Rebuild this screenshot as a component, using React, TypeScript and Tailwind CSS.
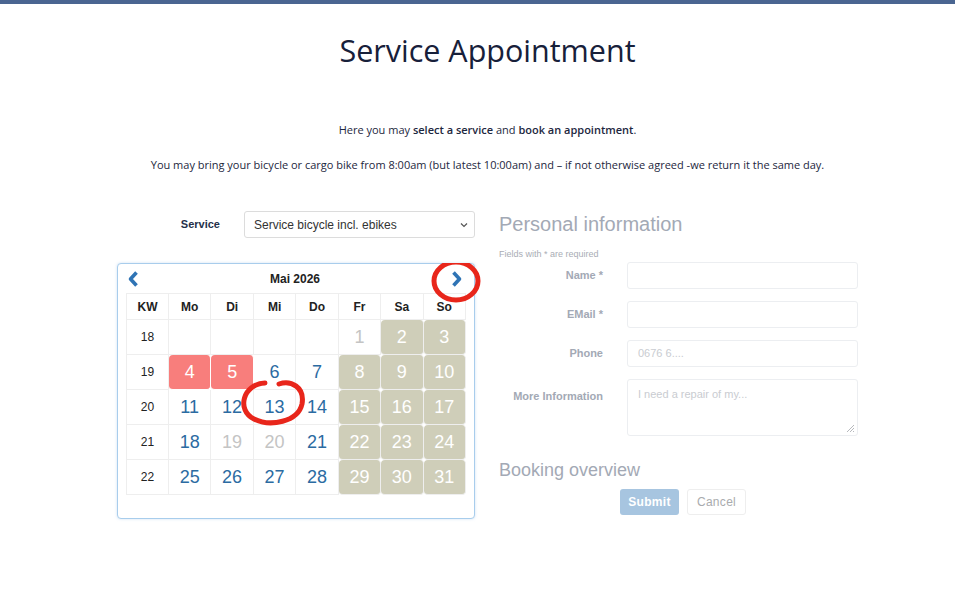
import React from "react";

type Cell = { d?: number; kind?: "free" | "off" | "busy" | "weekend" };

const WEEKS: { kw: number; days: Cell[] }[] = [
  {
    kw: 18,
    days: [{}, {}, {}, {}, { d: 1, kind: "off" }, { d: 2, kind: "weekend" }, { d: 3, kind: "weekend" }],
  },
  {
    kw: 19,
    days: [
      { d: 4, kind: "busy" },
      { d: 5, kind: "busy" },
      { d: 6, kind: "free" },
      { d: 7, kind: "free" },
      { d: 8, kind: "weekend" },
      { d: 9, kind: "weekend" },
      { d: 10, kind: "weekend" },
    ],
  },
  {
    kw: 20,
    days: [
      { d: 11, kind: "free" },
      { d: 12, kind: "free" },
      { d: 13, kind: "free" },
      { d: 14, kind: "free" },
      { d: 15, kind: "weekend" },
      { d: 16, kind: "weekend" },
      { d: 17, kind: "weekend" },
    ],
  },
  {
    kw: 21,
    days: [
      { d: 18, kind: "free" },
      { d: 19, kind: "off" },
      { d: 20, kind: "off" },
      { d: 21, kind: "free" },
      { d: 22, kind: "weekend" },
      { d: 23, kind: "weekend" },
      { d: 24, kind: "weekend" },
    ],
  },
  {
    kw: 22,
    days: [
      { d: 25, kind: "free" },
      { d: 26, kind: "free" },
      { d: 27, kind: "free" },
      { d: 28, kind: "free" },
      { d: 29, kind: "weekend" },
      { d: 30, kind: "weekend" },
      { d: 31, kind: "weekend" },
    ],
  },
];

const HEAD = ["KW", "Mo", "Di", "Mi", "Do", "Fr", "Sa", "So"];

function DayCell({ cell }: { cell: Cell }) {
  const base =
    "h-[35px] flex items-center justify-center text-[18px] border-r border-b border-[#eeeeee]";
  if (!cell.d) return <div className={base} />;
  if (cell.kind === "busy")
    return (
      <div className={base + " bg-[#f87e7c] text-white rounded-[4px] border-white"}>{cell.d}</div>
    );
  if (cell.kind === "weekend")
    return (
      <div className={base + " bg-[#cfceb9] text-white rounded-[4px] border-[#e4e3d6]"}>{cell.d}</div>
    );
  if (cell.kind === "off") return <div className={base + " text-[#c4c4c4]"}>{cell.d}</div>;
  return <div className={base + " text-[#2b6ba2]"}>{cell.d}</div>;
}

function Calendar() {
  return (
    <div className="relative mt-[25px] h-[256px] rounded-[4px] border border-[#a8cdec] bg-white px-[8px] shadow-[0_0_3px_rgba(120,170,220,0.35)] font-['Liberation_Sans',Arial,sans-serif]">
      {/* Kopfzeile */}
      <div className="flex h-[29px] items-center justify-between pl-[1px] pr-[3px]">
        <svg width="12" height="16" viewBox="0 0 12 16" aria-hidden="true">
          <path d="M9.5 1.5L3.5 8L9.5 14.5" fill="none" stroke="#2f74b5" strokeWidth="3.6" strokeLinejoin="round" />
        </svg>
        <span className="text-[12px] font-bold text-[#222]">Mai 2026</span>
        <svg width="12" height="16" viewBox="0 0 12 16" aria-hidden="true">
          <path d="M2.5 1.5L8.5 8L2.5 14.5" fill="none" stroke="#2f74b5" strokeWidth="3.6" strokeLinejoin="round" />
        </svg>
      </div>

      <div className="grid grid-cols-[42px_repeat(7,1fr)] border-l border-t border-[#eeeeee]">
        {HEAD.map((h) => (
          <div
            key={h}
            className="flex h-[26px] items-center justify-center border-r border-b border-[#eeeeee] text-[12px] font-bold text-[#222]"
          >
            {h}
          </div>
        ))}
        {WEEKS.map((w) => (
          <React.Fragment key={w.kw}>
            <div className="flex h-[35px] items-center justify-center border-r border-b border-[#eeeeee] text-[12px] text-[#222]">
              {w.kw}
            </div>
            {w.days.map((c, i) => (
              <DayCell key={i} cell={c} />
            ))}
          </React.Fragment>
        ))}
      </div>

      {/* Markierungen (handgezeichnet) */}
      <svg className="pointer-events-none absolute left-[-1px] top-[-1px]" width="380" height="280" viewBox="0 0 380 280">
        <ellipse cx="339" cy="18" rx="22" ry="19" fill="none" stroke="#e8261b" strokeWidth="5" />
        <path
          d="M148 120 C126 121 119 147 137 156 C153 164 181 159 185 141 C188 124 174 117 162 121"
          fill="none"
          stroke="#e8261b"
          strokeWidth="5"
          strokeLinecap="round"
        />
      </svg>
    </div>
  );
}

function Field({ label, placeholder, tall }: { label: string; placeholder?: string; tall?: boolean }) {
  return (
    <div className={"flex gap-6 " + (tall ? "items-start" : "items-center")}>
      <label className={"w-[104px] text-right text-[11px] font-bold text-[#a3a9b5] " + (tall ? "pt-[9px]" : "")}>
        {label}
      </label>
      <div
        className={
          "relative w-[231px] rounded-[3px] border border-[#eceef1] px-[10px] text-[11px] text-[#c9ccd1] " +
          (tall ? "h-[57px] pt-[6px]" : "flex h-[27px] items-center")
        }
      >
        {placeholder}
        {tall && (
          <svg className="absolute bottom-[2px] right-[2px]" width="10" height="10" viewBox="0 0 10 10">
            <path d="M9 2L2 9M9 5L5 9M9 8L8 9" stroke="#b7b9bd" strokeWidth="1" />
          </svg>
        )}
      </div>
    </div>
  );
}

export default function App() {
  return (
    <div className="min-h-screen bg-white">
      <div className="h-[4px] bg-[#4a6591]" />

      <div className="pl-[20px]">
        <h1 className="mt-[26px] text-center font-['Open_Sans',sans-serif] text-[30.5px] leading-[40px] text-[#17203a]">
          Service Appointment
        </h1>

        <div className="mt-[50px] text-center font-['Open_Sans',sans-serif] text-[11px] leading-[20px] text-[#1d2740]">
          <p>
            Here you may <span className="font-semibold">select a service</span> and{" "}
            <span className="font-semibold">book an appointment</span>.
          </p>
          <p className="mt-[15px]">
            You may bring your bicycle or cargo bike from 8:00am (but latest 10:00am) and – if not otherwise agreed -we
            return it the same day.
          </p>
        </div>

        <div className="mx-auto mt-[36px] flex w-[741px] gap-6">
          {/* linke Spalte */}
          <div className="w-[358px]">
            <div className="flex items-center justify-end gap-6 font-['Liberation_Sans',Arial,sans-serif]">
              <span className="text-[11px] font-bold text-[#24304a]">Service</span>
              <div className="flex h-[27px] w-[231px] items-center justify-between rounded-[3px] border border-[#dcdcdc] pl-[9px] pr-[6px] text-[12px] text-[#333]">
                <span>Service bicycle incl. ebikes</span>
                <svg width="8" height="6" viewBox="0 0 8 6" aria-hidden="true">
                  <path d="M1 1.5L4 4.5L7 1.5" fill="none" stroke="#555" strokeWidth="1.2" />
                </svg>
              </div>
            </div>
            <Calendar />
          </div>

          {/* rechte Spalte */}
          <div className="w-[359px] font-['Liberation_Sans',Arial,sans-serif]">
            <h2 className="text-[20px] leading-[26px] text-[#a3a9b5]">Personal information</h2>
            <p className="mt-[11px] text-[9px] text-[#a9adb5]">Fields with * are required</p>
            <div className="flex flex-col gap-[12px]">
              <Field label="Name *" />
              <Field label="EMail *" />
              <Field label="Phone" placeholder="0676 6...." />
              <Field label="More Information" placeholder="I need a repair of my..." tall />
            </div>
            <h2 className="mt-[22px] text-[18px] leading-[24px] text-[#a3a9b5]">Booking overview</h2>
            <div className="ml-[121px] mt-[7px] flex gap-2">
              <button className="h-[26px] w-[59px] rounded-[3px] bg-[#a7c5e0] text-[12px] font-bold tracking-[0.3px] text-white">
                Submit
              </button>
              <button className="h-[26px] w-[59px] rounded-[3px] border border-[#eeeeee] text-[12px] tracking-[0.3px] text-[#a9abae]">
                Cancel
              </button>
            </div>
          </div>
        </div>
      </div>
    </div>
  );
}
